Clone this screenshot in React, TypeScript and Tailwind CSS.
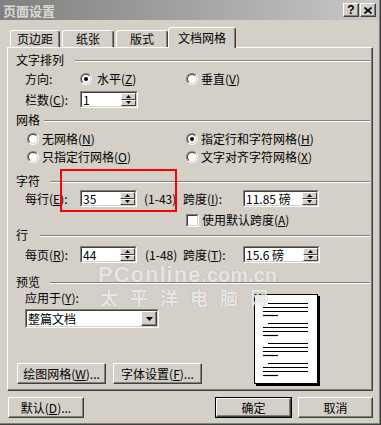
import React from "react";

function U({ children }: { children: React.ReactNode }) {
  return <span className="underline underline-offset-[1px]">{children}</span>;
}

function Sunken({ className = "", children }: { className?: string; children?: React.ReactNode }) {
  return (
    <div className={`border-t border-l border-t-[#808080] border-l-[#808080] border-b border-r border-b-white border-r-white ${className}`}>
      <div className="w-full h-full flex border-t border-l border-t-[#404040] border-l-[#404040] border-b border-r border-b-[#d4d0c8] border-r-[#d4d0c8] bg-white">
        {children}
      </div>
    </div>
  );
}

function Tri({ up }: { up?: boolean }) {
  return (
    <svg width="5" height="3" viewBox="0 0 5 3">
      {up ? <polygon points="2.5,0 5,3 0,3" fill="#000" /> : <polygon points="0,0 5,0 2.5,3" fill="#000" />}
    </svg>
  );
}

function SpinBtn({ up }: { up?: boolean }) {
  return (
    <div className="flex-1 flex items-center justify-center bg-[#d4d0c8] border-t border-l border-t-white border-l-white border-b border-r border-b-[#404040] border-r-[#404040]">
      <Tri up={up} />
    </div>
  );
}

function SpinInput({ className, value }: { className: string; value: string }) {
  return (
    <Sunken className={`h-[17px] ${className}`}>
      <div className="flex-1 flex items-center pl-[1px]">{value}</div>
      <div className="w-[15px] flex flex-col">
        <SpinBtn up />
        <SpinBtn />
      </div>
    </Sunken>
  );
}

function Radio({ checked }: { checked?: boolean }) {
  return (
    <span className="w-[12px] h-[12px] shrink-0 rounded-full border border-t-[#808080] border-l-[#808080] border-b-white border-r-white flex">
      <span className="w-full h-full rounded-full border border-t-[#404040] border-l-[#404040] border-b-[#d4d0c8] border-r-[#d4d0c8] bg-white flex items-center justify-center">
        {checked && <span className="w-[4px] h-[4px] rounded-full bg-black" />}
      </span>
    </span>
  );
}

function Heading({ label, w, className = "" }: { label: string; w: string; className?: string }) {
  return (
    <div className={`flex items-center h-[14px] pl-[8px] pr-[2px] ${className}`}>
      <span className={`shrink-0 ${w}`}>{label}</span>
      <div className="flex-1 mt-[2px] h-0 border-t border-b border-t-[#808080] border-b-white" />
    </div>
  );
}

function Btn({ className = "", children }: { className?: string; children: React.ReactNode }) {
  return (
    <div className={`flex items-center justify-center bg-[#d4d0c8] border-t border-l border-t-white border-l-white border-b border-r border-b-[#404040] border-r-[#404040] shadow-[inset_-1px_-1px_0_#808080] ${className}`}>
      {children}
    </div>
  );
}

function TitleBtn({ children, className = "" }: { children: React.ReactNode; className?: string }) {
  return (
    <div className={`w-[16px] h-[14px] flex items-center justify-center bg-[#d4d0c8] border-t border-l border-t-white border-l-white border-b border-r border-b-[#404040] border-r-[#404040] shadow-[inset_-1px_-1px_0_#808080] ${className}`}>
      {children}
    </div>
  );
}

function PreviewPage() {
  const groups = [8, 28, 48, 68];
  return (
    <div className="mt-[3px] w-[64px] h-[90px] bg-white border border-black shadow-[2px_2px_0_#000] overflow-hidden">
      <svg width="62" height="88" viewBox="0 0 62 88">
        {groups.map((g) => (
          <g key={g} stroke="#000" strokeWidth="1.2">
            <line x1="13" y1={g + 0.5} x2="53" y2={g + 0.5} />
            <line x1="8" y1={g + 4.5} x2="53" y2={g + 4.5} />
            <line x1="8" y1={g + 8.5} x2="53" y2={g + 8.5} />
            <line x1="8" y1={g + 12.5} x2="23" y2={g + 12.5} />
          </g>
        ))}
      </svg>
    </div>
  );
}

export default function App() {
  return (
    <div className="relative w-[381px] h-[425px] bg-[#d4d0c8] overflow-hidden text-[12px] leading-none text-black font-['Noto_Sans_CJK_SC','Liberation_Sans',sans-serif] shadow-[inset_-1px_-1px_0_#404040,inset_-2px_-2px_0_#808080]">
      {/* Title bar */}
      <div className="flex items-center h-[20px] mr-[2px] bg-linear-to-r from-[#808080] to-[#c8c8c8] pl-[3px] pr-[3px]">
        <span className="font-bold text-[13px] text-[#dcdad4]">页面设置</span>
        <div className="flex-1" />
        <TitleBtn>
          <span className="font-bold text-[12px] font-['Liberation_Sans',sans-serif]">?</span>
        </TitleBtn>
        <TitleBtn className="ml-[1px]">
          <svg width="8" height="7" viewBox="0 0 8 7">
            <path d="M0.5 0.5 L7.5 6.5 M7.5 0.5 L0.5 6.5" stroke="#000" strokeWidth="1.6" />
          </svg>
        </TitleBtn>
      </div>

      {/* Tabs */}
      <div className="flex items-end h-[27px] pl-[10px]">
        <div className="w-[50px] h-[17px] flex items-center justify-center border-t border-l border-t-white border-l-white border-r border-r-[#404040] shadow-[inset_-1px_0_0_#808080] rounded-t-[3px]">
          页边距
        </div>
        <div className="ml-[2px] w-[52px] h-[17px] flex items-center justify-center border-t border-l border-t-white border-l-white border-r border-r-[#404040] shadow-[inset_-1px_0_0_#808080] rounded-t-[3px]">
          纸张
        </div>
        <div className="ml-[2px] w-[52px] h-[17px] flex items-center justify-center border-t border-l border-t-white border-l-white border-r border-r-[#404040] shadow-[inset_-1px_0_0_#808080] rounded-t-[3px]">
          版式
        </div>
        <div className="relative z-10 -mb-[1px] w-[68px] h-[21px] flex items-center justify-center bg-[#d4d0c8] border-t border-l border-t-white border-l-white border-r border-r-[#404040] shadow-[inset_-1px_0_0_#808080] rounded-t-[3px]">
          文档网格
        </div>
      </div>

      {/* Panel */}
      <div className="ml-[7px] w-[366px] h-[344px] flex flex-col border-t border-l border-t-white border-l-white border-b border-r border-b-[#404040] border-r-[#404040] shadow-[inset_-1px_-1px_0_#808080]">
        <Heading label="文字排列" w="w-[59px]" className="mt-[5px]" />

        <div className="mt-[3px] h-[18px] flex items-center pl-[17px]">
          <span className="w-[55px]">方向:</span>
          <div className="w-[106px] flex items-center gap-[5px]">
            <Radio checked />
            <span>
              水平(<U>Z</U>)
            </span>
          </div>
          <div className="flex items-center gap-[3px]">
            <Radio />
            <span>
              垂直(<U>V</U>)
            </span>
          </div>
        </div>

        <div className="mt-[3px] h-[17px] flex items-center pl-[17px]">
          <span className="w-[55px]">
            栏数(<U>C</U>):
          </span>
          <SpinInput className="w-[58px]" value="1" />
        </div>

        <Heading label="网格" w="w-[28px]" className="mt-[5px]" />

        <div className="mt-[4px] h-[16px] flex items-center pl-[19px]">
          <div className="w-[159px] flex items-center gap-[3px]">
            <Radio />
            <span>
              无网格(<U>N</U>)
            </span>
          </div>
          <div className="flex items-center gap-[3px]">
            <Radio checked />
            <span>
              指定行和字符网格(<U>H</U>)
            </span>
          </div>
        </div>

        <div className="mt-[2px] h-[16px] flex items-center pl-[19px]">
          <div className="w-[159px] flex items-center gap-[3px]">
            <Radio />
            <span>
              只指定行网格(<U>O</U>)
            </span>
          </div>
          <div className="flex items-center gap-[3px]">
            <Radio />
            <span>
              文字对齐字符网格(<U>X</U>)
            </span>
          </div>
        </div>

        <Heading label="字符" w="w-[34px]" className="mt-[9px]" />

        <div className="mt-[2px] h-[17px] flex items-center pl-[17px]">
          <span className="w-[55px]">
            每行(<U>E</U>):
          </span>
          <SpinInput className="w-[57px]" value="35" />
          <span className="w-[46px] pl-[7px]">(1-43)</span>
          <span className="w-[60px]">
            跨度(<U>I</U>):
          </span>
          <SpinInput className="w-[76px]" value="11.85 磅" />
        </div>

        <div className="mt-[5px] h-[16px] flex items-center pl-[178px] gap-[3px]">
          <Sunken className="w-[13px] h-[13px] shrink-0" />
          <span>
            使用默认跨度(<U>A</U>)
          </span>
        </div>

        <Heading label="行" w="w-[24px]" />

        <div className="mt-[4px] h-[17px] flex items-center pl-[17px]">
          <span className="w-[55px]">
            每页(<U>R</U>):
          </span>
          <SpinInput className="w-[57px]" value="44" />
          <span className="w-[46px] pl-[8px]">(1-48)</span>
          <span className="w-[60px]">
            跨度(<U>T</U>):
          </span>
          <SpinInput className="w-[77px]" value="15.6 磅" />
        </div>

        <Heading label="预览" w="w-[34px]" className="mt-[12px]" />

        <div className="mt-[2px] flex items-start">
          <div className="w-[246px] flex flex-col pl-[9px]">
            <span className="h-[14px] flex items-center ml-[8px]">
              应用于(<U>Y</U>):
            </span>
            <Sunken className="mt-[4px] ml-[8px] w-[134px] h-[19px]">
              <div className="flex-1 flex items-center pl-[1px]">整篇文档</div>
              <div className="w-[16px] flex items-center justify-center bg-[#d4d0c8] border-t border-l border-t-white border-l-white border-b border-r border-b-[#404040] border-r-[#404040] shadow-[inset_-1px_-1px_0_#808080]">
                <svg width="7" height="4" viewBox="0 0 7 4">
                  <polygon points="0,0 7,0 3.5,4" fill="#000" />
                </svg>
              </div>
            </Sunken>
            <div className="mt-[35px] flex gap-[7px]">
              <Btn className="w-[89px] h-[21px]">
                <span>
                  绘图网格(<U>W</U>)...
                </span>
              </Btn>
              <Btn className="w-[89px] h-[21px]">
                <span>
                  字体设置(<U>F</U>)...
                </span>
              </Btn>
            </div>
          </div>
          <PreviewPage />
        </div>
      </div>

      {/* Bottom buttons */}
      <div className="mt-[6px] flex items-center pl-[8px] pr-[8px]">
        <Btn className="w-[76px] h-[21px]">
          <span>
            默认(<U>D</U>)...
          </span>
        </Btn>
        <div className="flex-1" />
        <div className="border border-black">
          <Btn className="w-[75px] h-[19px]">确定</Btn>
        </div>
        <Btn className="ml-[6px] w-[75px] h-[21px]">取消</Btn>
      </div>

      {/* Watermark overlay */}
      <div className="absolute left-[98px] top-[266px] pointer-events-none text-white/75 [text-shadow:0_0_1px_rgba(90,90,90,0.45)]">
        <div className="flex items-baseline leading-[17px]">
          <span className="font-bold text-[22px] tracking-[1px] font-['Liberation_Sans',sans-serif]">PConline</span>
          <span className="text-[20px] font-bold font-['Liberation_Sans',sans-serif]">.com.cn</span>
        </div>
        <div className="mt-[4px] ml-[2px] font-bold text-[18px] tracking-[12px] leading-none">太平洋电脑网</div>
      </div>

      {/* Red highlight */}
      <div className="absolute left-[60px] top-[169px] w-[117px] h-[43px] border-2 border-[#ff0000] pointer-events-none" />
    </div>
  );
}
